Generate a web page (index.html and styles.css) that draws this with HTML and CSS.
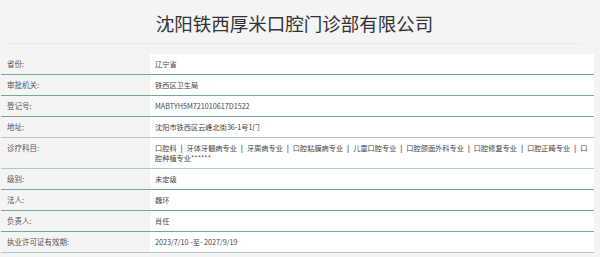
FILE: index.html
```html
<!DOCTYPE html>
<html lang="zh-CN">
<head>
<meta charset="utf-8">
<title>沈阳铁西厚米口腔门诊部有限公司</title>
<link rel="stylesheet" href="styles.css">
</head>
<body>
<div class="page">
  <header class="head">
    <h1 class="title">沈阳铁西厚米口腔门诊部有限公司</h1>
  </header>
  <div class="info">
    <div class="row"><div class="label">省份:</div><div class="value">辽宁省</div></div>
    <div class="row"><div class="label">审批机关:</div><div class="value">铁西区卫生局</div></div>
    <div class="row"><div class="label">登记号:</div><div class="value">MABTYH5M721010617D1522</div></div>
    <div class="row soft"><div class="label">地址:</div><div class="value">沈阳市铁西区云峰北街36-1号1门</div></div>
    <div class="row soft"><div class="label">诊疗科目:</div><div class="value">口腔科<span class="sep">|</span>牙体牙髓病专业<span class="sep">|</span>牙周病专业<span class="sep">|</span>口腔粘膜病专业<span class="sep">|</span>儿童口腔专业<span class="sep">|</span>口腔颌面外科专业<span class="sep">|</span>口腔修复专业<span class="sep">|</span>口腔正畸专业<span class="sep">|</span>口腔种植专业******</div></div>
    <div class="row"><div class="label">级别:</div><div class="value">未定级</div></div>
    <div class="row"><div class="label">法人:</div><div class="value">魏环</div></div>
    <div class="row"><div class="label">负责人:</div><div class="value">肖任</div></div>
    <div class="row soft"><div class="label">执业许可证有效期:</div><div class="value">2023/7/10 -至- 2027/9/19</div></div>
  </div>
  <div class="next"></div>
</div>
</body>
</html>
```
FILE: styles.css
```css
html, body {
  margin: 0;
  padding: 0;
  background: #f4f4f4;
}
body {
  font-family: "Noto Sans CJK SC", "Noto Sans", sans-serif;
  color: #444;
}
.page {
  padding: 0 6px 0 1px;
}
.head {
  height: 43px;
  margin: 0 13px 0 7px;
  border-bottom: 1px solid #ebebeb;
  display: flex;
  align-items: center;
  justify-content: center;
}
.title {
  margin: 0;
  font-size: 18.5px;
  font-weight: normal;
  color: #333;
  line-height: 22px;
  padding-top: 3px;
}
.info {
  margin-top: 10px;
}
.row {
  display: grid;
  grid-template-columns: 149px 1fr;
  border-bottom: 1px solid #70ad8c;
  font-size: 7.2px;
  line-height: 10.4px;
}
.row.soft {
  border-bottom-color: #a9cfb9;
}
.label {
  padding: 4.8px 6px;
  color: #555;
  font-size: 7.5px;
}
.value {
  background: #fff;
  padding: 4.8px 4px 4.8px 5px;
  color: #444;
}
.sep {
  display: inline-block;
  width: 10px;
  text-align: center;
  color: #555;
  font-weight: bold;
}
.next {
  margin: 4px 8px 0 8px;
  height: 6px;
  border-top: 1px solid #dcdcdc;
}
```
